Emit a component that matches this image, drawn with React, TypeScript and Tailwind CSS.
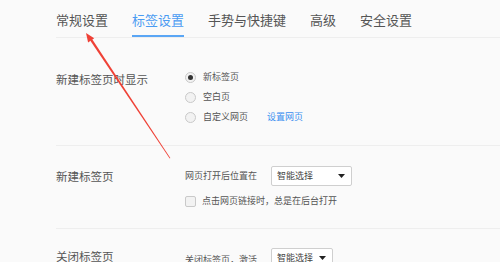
import React from "react";

const font = { fontFamily: '"Noto Sans CJK SC", "Noto Sans", sans-serif' };

function Radio({ checked, label, extra }: { checked?: boolean; label: string; extra?: string }) {
  return (
    <div className="flex h-[20px] items-center">
      <div className="flex h-[11px] w-[11px] items-center justify-center rounded-full border border-[#c9c9c9] bg-[#f2f2f2]">
        {checked && <div className="h-[5px] w-[5px] rounded-full bg-[#333]" />}
      </div>
      <span className="ml-[7px] text-[9px] leading-[12px] text-[#555]">{label}</span>
      {extra && <span className="ml-[19px] text-[9px] leading-[12px] text-[#3b8ff0]">{extra}</span>}
    </div>
  );
}

function Select({ width, value }: { width: string; value: string }) {
  return (
    <div className={`flex h-[20px] items-center justify-between rounded-[2px] border border-[#cfcfcf] bg-white pl-[5px] pr-[6px] ${width}`}>
      <span className="text-[9px] leading-[12px] text-[#444]">{value}</span>
      <svg width="7" height="4" viewBox="0 0 7 4">
        <path d="M0 0 L7 0 L3.5 4 Z" fill="#222" />
      </svg>
    </div>
  );
}

export default function App() {
  const tabs = ["常规设置", "标签设置", "手势与快捷键", "高级", "安全设置"];
  return (
    <div className="relative h-[262px] w-[500px] overflow-hidden bg-[#fafafa]" style={font}>
      {/* Tabs */}
      <div className="ml-[56px] flex gap-[24px] border-b border-[#eeeeee]">
        {tabs.map((t, i) => (
          <div
            key={t}
            className={`pt-[12px] pb-[7px] text-[13px] leading-[16px] border-b-2 ${
              i === 1 ? "border-[#5aa6f5] text-[#4a9bf2]" : "border-transparent text-[#555]"
            }`}
          >
            {t}
          </div>
        ))}
      </div>

      {/* Section 1 */}
      <div className="ml-[56px] flex border-b border-[#eeeeee] pt-[29px] pb-[18px]">
        <div className="mt-[4px] w-[129px] text-[11.5px] leading-[16px] text-[#555]">新建标签页时显示</div>
        <div className="flex flex-col">
          <Radio checked label="新标签页" />
          <Radio label="空白页" />
          <Radio label="自定义网页" extra="设置网页" />
        </div>
      </div>

      {/* Section 2 */}
      <div className="ml-[56px] flex border-b border-[#eeeeee] pt-[20px] pb-[17px]">
        <div className="mt-[2px] w-[129px] text-[11.5px] leading-[16px] text-[#555]">新建标签页</div>
        <div className="flex flex-col gap-[5px]">
          <div className="flex h-[20px] items-center">
            <span className="w-[86px] text-[9px] leading-[12px] text-[#555]">网页打开后位置在</span>
            <Select width="w-[81px]" value="智能选择" />
          </div>
          <div className="flex h-[20px] items-center">
            <div className="h-[11px] w-[11px] rounded-[2px] border border-[#c9c9c9] bg-[#f2f2f2]" />
            <span className="ml-[6px] text-[9px] leading-[12px] text-[#555]">点击网页链接时，总是在后台打开</span>
          </div>
        </div>
      </div>

      {/* Section 3 */}
      <div className="ml-[56px] flex pt-[19px]">
        <div className="mt-[0px] w-[129px] text-[11.5px] leading-[16px] text-[#555]">关闭标签页</div>
        <div className="flex h-[20px] items-center">
          <span className="w-[86px] pt-[4px] text-[9px] leading-[12px] text-[#555]">关闭标签页，激活</span>
          <Select width="w-[62px]" value="智能选择" />
        </div>
      </div>

      {/* annotation arrow */}
      <svg className="pointer-events-none absolute left-0 top-0" width="500" height="262" viewBox="0 0 500 262">
        <polygon points="170.3,158 169.7,158.4 90.2,40.6 92.2,39.3" fill="#ef4136" />
        <polygon points="86,33 94.2,38.3 88.1,42.6" fill="#ef4136" />
      </svg>
    </div>
  );
}
